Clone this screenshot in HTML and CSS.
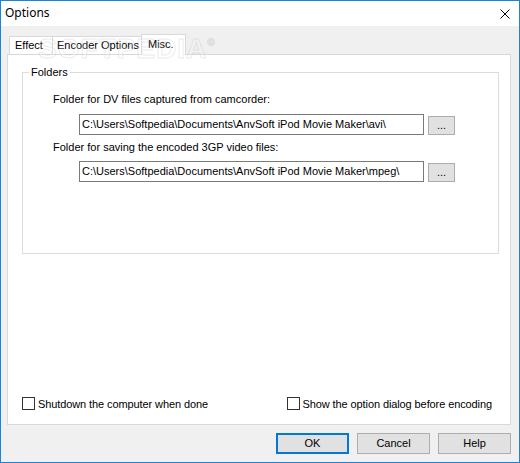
FILE: index.html
```html
<!DOCTYPE html>
<html>
<head>
<meta charset="utf-8">
<title>Options</title>
<link rel="stylesheet" href="styles.css">
</head>
<body>
<div class="window">
  <div class="titlebar">
    <span class="title">Options</span>
    <svg class="close" width="10" height="10" viewBox="0 0 10 10"><path d="M0.5 0.5 L9.5 9.5 M9.5 0.5 L0.5 9.5" stroke="#000" stroke-width="1" fill="none"/></svg>
  </div>
  <div class="client">
    <div class="tabs">
      <div class="tab tab-effect">Effect</div>
      <div class="tab tab-encoder">Encoder Options</div>
      <div class="tab tab-misc active">Misc.</div>
    </div>
    <div class="panel">
      <fieldset class="group">
        <legend>Folders</legend>
        <div class="grpbody">
          <div class="label first">Folder for DV files captured from camcorder:</div>
          <div class="pathrow">
            <div class="input">C:\Users\Softpedia\Documents\AnvSoft iPod Movie Maker\avi\</div>
            <div class="browse">...</div>
          </div>
          <div class="label second">Folder for saving the encoded 3GP video files:</div>
          <div class="pathrow">
            <div class="input">C:\Users\Softpedia\Documents\AnvSoft iPod Movie Maker\mpeg\</div>
            <div class="browse">...</div>
          </div>
        </div>
      </fieldset>
      <div class="checks">
        <label class="check"><span class="box"></span><span>Shutdown the computer when done</span></label>
        <label class="check"><span class="box"></span><span>Show the option dialog before encoding</span></label>
      </div>
    </div>
    <div class="buttons">
      <div class="btn default">OK</div>
      <div class="btn">Cancel</div>
      <div class="btn">Help</div>
    </div>
  </div>
  <div class="watermark">SOFTPEDIA<span class="reg">®</span></div>
</div>
</body>
</html>
```

FILE: styles.css
```css
html, body {
  margin: 0;
  padding: 0;
  background: #f0f0f0;
}
.window {
  position: relative;
  width: 520px;
  height: 463px;
  box-sizing: border-box;
  border: 1px solid #1c84d8;
  display: flex;
  flex-direction: column;
  font-family: "Liberation Sans", Arial, sans-serif;
  font-size: 11px;
  color: #000;
  overflow: hidden;
}
.titlebar {
  height: 25px;
  flex: none;
  background: #fff;
  display: flex;
  align-items: center;
  justify-content: space-between;
  padding: 0 9px 0 4px;
}
.title {
  font-family: "Noto Sans", "Open Sans", sans-serif;
  font-size: 12px;
  position: relative;
  top: -1px;
}
.close {
  display: block;
}
.client {
  flex: 1;
  display: flex;
  flex-direction: column;
  background: #f0f0f0;
  padding: 8px 8px 8px 6px;
}
.tabs {
  display: flex;
  align-items: flex-end;
  height: 20px;
  margin-left: 2px;
  position: relative;
  z-index: 2;
}
.tab {
  box-sizing: border-box;
  height: 18px;
  background: #fff;
  border: 1px solid #d9d9d9;
  border-bottom: none;
  line-height: 17px;
  white-space: nowrap;
}
.tab-effect { width: 44px; padding-left: 5px; }
.tab-encoder { width: 90px; margin-left: -1px; padding-left: 4px; }
.tab-misc { width: 45px; margin-left: -1px; padding-left: 6px; }
.tab.active {
  height: 21px;
  margin-bottom: -1px;
  line-height: 19px;
}
.panel {
  height: 371px;
  box-sizing: border-box;
  background: #fff;
  border: 1px solid #d9d9d9;
  display: flex;
  flex-direction: column;
  padding: 0 11px 0 14px;
}
.group {
  margin: 11px 0 0 0;
  padding: 0;
  height: 188px;
  box-sizing: border-box;
  border: 1px solid #dcdcdc;
  min-width: 0;
}
.group legend {
  margin-left: 6px;
  padding: 0 2px;
  line-height: 13px;
}
.grpbody {
  padding-left: 30px;
}
.label {
  line-height: 13px;
  white-space: nowrap;
}
.label.first { margin-top: 14px; }
.label.second { margin-top: 6px; }
.pathrow {
  display: flex;
  align-items: flex-end;
  gap: 4px;
  margin-top: 8px;
  padding-left: 26px;
}
.label.second + .pathrow { margin-top: 7px; }
.input {
  box-sizing: border-box;
  width: 345px;
  height: 21px;
  border: 1px solid #7a7a7a;
  background: #fff;
  padding-left: 2px;
  line-height: 19px;
  white-space: nowrap;
  overflow: hidden;
}
.browse {
  box-sizing: border-box;
  width: 27px;
  height: 19px;
  border: 1px solid #adadad;
  background: #e1e1e1;
  text-align: center;
  line-height: 17px;
}
.checks {
  margin-top: auto;
  margin-bottom: 14px;
  display: flex;
  justify-content: space-between;
  padding-right: 7px;
}
.check {
  display: flex;
  align-items: center;
  gap: 3px;
  height: 13px;
  white-space: nowrap;
}
.check span:last-child {
  letter-spacing: -0.1px;
}
.box {
  box-sizing: border-box;
  width: 13px;
  height: 13px;
  border: 1px solid #333;
  background: #fff;
  flex: none;
}
.buttons {
  display: flex;
  justify-content: flex-end;
  gap: 8px;
  margin-top: 8px;
}
.btn {
  box-sizing: border-box;
  width: 73px;
  height: 21px;
  border: 1px solid #adadad;
  background: #e1e1e1;
  text-align: center;
  line-height: 19px;
}
.btn.default {
  border: 2px solid #0078d7;
  line-height: 17px;
}
.watermark {
  position: absolute;
  left: 37px;
  top: 32px;
  font-family: "Liberation Sans", Arial, sans-serif;
  font-weight: bold;
  font-size: 28px;
  letter-spacing: 1px;
  color: rgba(255, 255, 255, 0.2);
  -webkit-text-stroke: 1px rgba(160, 160, 160, 0.22);
  pointer-events: none;
  z-index: 5;
}
.watermark .reg {
  font-size: 10px;
  vertical-align: top;
  position: relative;
  top: 4px;
}
```
